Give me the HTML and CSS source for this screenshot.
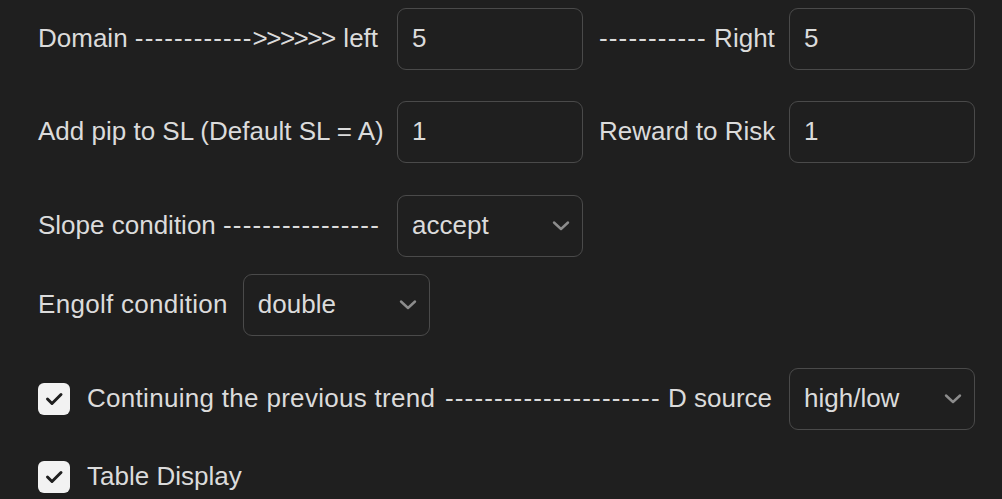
FILE: index.html
```html
<!DOCTYPE html>
<html>
<head>
<meta charset="utf-8">
<link rel="stylesheet" href="styles.css">
</head>
<body>
<div class="form">
  <div class="row">
    <div class="label">Domain <span class="dash">------------</span><span class="arrows">&gt;&gt;&gt;&gt;&gt;&gt;</span> left</div>
    <div class="box"><span class="value">5</span></div>
    <div class="label"><span class="dash">-----------</span> Right</div>
    <div class="box"><span class="value">5</span></div>
  </div>

  <div class="row gap-lg">
    <div class="label">Add pip to SL (Default SL = A)</div>
    <div class="box"><span class="value">1</span></div>
    <div class="label">Reward to Risk</div>
    <div class="box"><span class="value">1</span></div>
  </div>

  <div class="row gap-xl">
    <div class="label">Slope condition <span class="dash">----------------</span></div>
    <div class="box select">
      <span class="value">accept</span>
      <svg class="chev" width="20" height="12" viewBox="0 0 20 12"><path d="M3 2.5 L10 9 L17 2.5" fill="none" stroke="#8c8c8c" stroke-width="2.4" stroke-linecap="round" stroke-linejoin="round"/></svg>
    </div>
  </div>

  <div class="inline gap-sm">
    <div class="label wide">Engolf condition</div>
    <div class="box select narrow">
      <span class="value">double</span>
      <svg class="chev" width="20" height="12" viewBox="0 0 20 12"><path d="M3 2.5 L10 9 L17 2.5" fill="none" stroke="#8c8c8c" stroke-width="2.4" stroke-linecap="round" stroke-linejoin="round"/></svg>
    </div>
  </div>

  <div class="row gap-xl">
    <div class="check-cell">
      <span class="checkbox">
        <svg width="32" height="32" viewBox="0 0 32 32"><path d="M9.5 16 L14 20.5 L23 11.5" fill="none" stroke="#1f1f1f" stroke-width="3" stroke-linecap="round" stroke-linejoin="round"/></svg>
      </span>
      <span class="check-text wide">Continuing the previous trend</span>
      <span class="trail"><span class="dash">----------------------</span> D source</span>
    </div>
    <div class="box select">
      <span class="value">high/low</span>
      <svg class="chev" width="20" height="12" viewBox="0 0 20 12"><path d="M3 2.5 L10 9 L17 2.5" fill="none" stroke="#8c8c8c" stroke-width="2.4" stroke-linecap="round" stroke-linejoin="round"/></svg>
    </div>
  </div>

  <div class="check-row gap-lg">
    <span class="checkbox">
      <svg width="32" height="32" viewBox="0 0 32 32"><path d="M9.5 16 L14 20.5 L23 11.5" fill="none" stroke="#1f1f1f" stroke-width="3" stroke-linecap="round" stroke-linejoin="round"/></svg>
    </span>
    <span class="check-text">Table Display</span>
  </div>
</div>
</body>
</html>
```

FILE: styles.css
```css
html, body {
  margin: 0;
  padding: 0;
  background: #1f1f1f;
}

body {
  color: #dbdbdb;
  font-family: "Liberation Sans", Arial, sans-serif;
  font-size: 26px;
  line-height: 1.2;
}

.form {
  padding: 8px 0 0 38px;
}

.row {
  display: grid;
  grid-template-columns: 343px 186px 174px 186px;
  column-gap: 16px;
  align-items: center;
  min-height: 62px;
}

.gap-lg {
  margin-top: 31px;
}

.gap-xl {
  margin-top: 32px;
}

.gap-sm {
  margin-top: 17px;
}

.label {
  white-space: nowrap;
}

.wide {
  letter-spacing: 0.3px;
}

.dash {
  letter-spacing: 1.15px;
}

.arrows {
  letter-spacing: -1.5px;
  margin-right: 1.5px;
}

.box {
  height: 62px;
  box-sizing: border-box;
  border: 1px solid #4a4a4a;
  border-radius: 9px;
  display: flex;
  align-items: center;
  padding: 0 14px;
}

.select {
  justify-content: space-between;
  padding-right: 11px;
}

.narrow {
  width: 187px;
}

.inline {
  display: flex;
  align-items: center;
  gap: 15px;
}

.check-cell {
  grid-column: 1 / 4;
  display: flex;
  align-items: center;
}

.checkbox {
  width: 32px;
  height: 32px;
  border-radius: 6px;
  background: #f2f2f2;
  display: inline-flex;
  flex: none;
}

.check-text {
  margin-left: 17px;
  white-space: nowrap;
}

.trail {
  margin-left: auto;
  padding-right: 1px;
  white-space: nowrap;
}

.check-row {
  display: flex;
  align-items: center;
  height: 32px;
}
```
